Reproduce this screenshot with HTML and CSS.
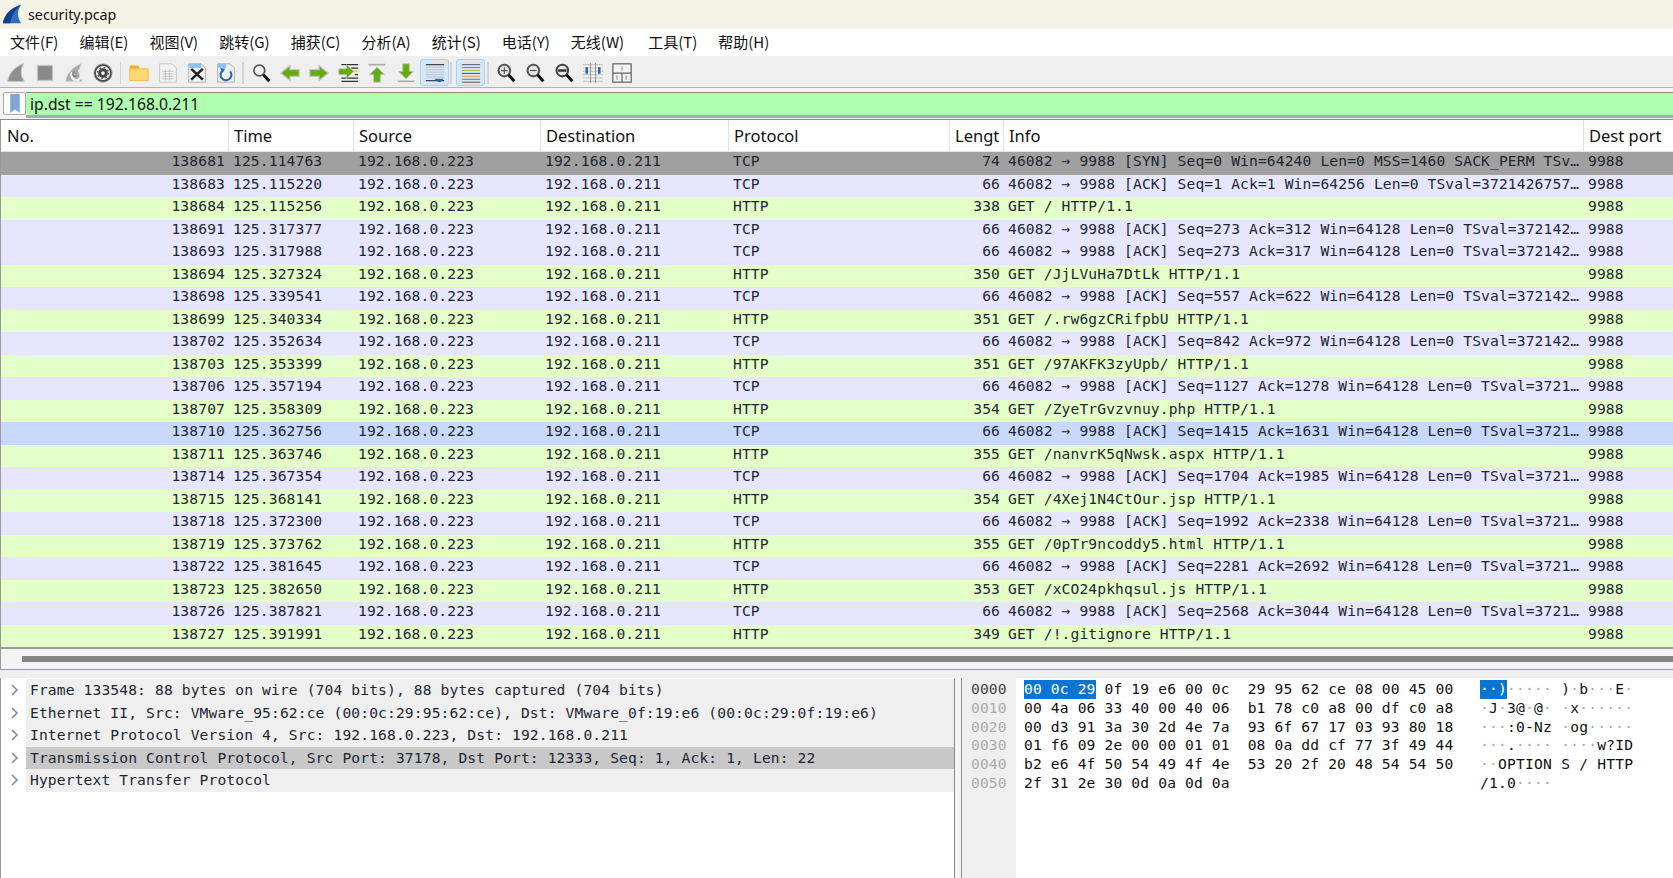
FILE: index.html
```html
<!DOCTYPE html>
<html lang="zh">
<head>
<meta charset="utf-8">
<title>security.pcap</title>
<link rel="stylesheet" href="styles.css">
</head>
<body>
<div class="app">
  <header class="titlebar">
    <svg class="applogo" viewBox="0 0 24 24"><path d="M1 23C3 13 10 5 23 1 18 8 18 16 23 23Z" fill="#2f6fc0"/><path d="M1 23C3 13 10 5 23 1 15 8 11 15 10 23Z" fill="#123f8f"/></svg>
    <span>security.pcap</span>
  </header>
  <nav class="menubar">
    <span>文件(F)</span><span>编辑(E)</span><span>视图(V)</span><span>跳转(G)</span><span>捕获(C)</span><span>分析(A)</span><span>统计(S)</span><span>电话(Y)</span><span>无线(W)</span><span class="menu-tools">工具(T)</span><span>帮助(H)</span>
  </nav>
  <div class="toolbar">
    <div class="tool"><svg viewBox="0 0 24 24"><path d="M2 22C4 12 10 5 21 1 17 8 17 15 22 22Z" fill="#8f8f8f" stroke="#bdbdbd"/></svg></div>
    <div class="tool"><svg viewBox="0 0 24 24"><rect x="3" y="3" width="18" height="18" fill="#8a8a8a" stroke="#c4c4c4" stroke-width="1.5"/></svg></div>
    <div class="tool"><svg viewBox="0 0 24 24"><path d="M2 22C4 12 10 5 21 1 17 8 17 15 22 22Z" fill="#a8a8a8" stroke="#cfcfcf"/><path d="M17 9a6 6 0 1 1-7 2" fill="none" stroke="#efefef" stroke-width="3"/><path d="M15 15a2.500 2.500 0 1 1-2-4" fill="none" stroke="#777" stroke-width="1.500"/></svg></div>
    <div class="tool"><svg viewBox="0 0 24 24"><circle cx="12" cy="12" r="11" fill="#4a4a4a" stroke="#a5a5a5"/><circle cx="12" cy="12" r="8.500" fill="#f2f2f2"/><circle cx="12" cy="12" r="4" fill="none" stroke="#444" stroke-width="3.500"/><circle cx="12" cy="12" r="6.500" fill="none" stroke="#444" stroke-width="1.500" stroke-dasharray="2 3.100"/></svg></div>
    <i class="sep s1"></i>
    <div class="tool"><svg viewBox="0 0 24 24"><path d="M1 7V3h10l2 4Z" fill="#f4ae1c"/><path d="M1 7h22v14H1Z" fill="#fcd872" stroke="#eab83e"/></svg></div>
    <div class="tool"><svg viewBox="0 0 24 24"><path d="M2 1h15l5 5v17H2Z" fill="#f3f3f3" stroke="#bdbdbd"/><path d="M5 10h14M5 13h14M5 16h14M5 19h14M9 8v13M14 8v13" stroke="#bcbcbc" fill="none"/></svg></div>
    <div class="tool"><svg viewBox="0 0 24 24"><path d="M2 1h15l5 5v17H2Z" fill="#f1f1f1" stroke="#a5a5a5"/><path d="M2 1h15v5H2Z" fill="#8cc4ee"/><path d="M5 7l14 13M19 7L5 20" stroke="#222" stroke-width="3"/></svg></div>
    <div class="tool"><svg viewBox="0 0 24 24"><path d="M2 1h15l5 5v17H2Z" fill="#f1f1f1" stroke="#a5a5a5"/><path d="M2 1h10v5H2Z" fill="#8cc4ee"/><path d="M8 9a6.500 6.500 0 1 0 9 1" fill="none" stroke="#2a65ad" stroke-width="2.500"/><path d="M5 6l6 1-3 5Z" fill="#2a65ad"/></svg></div>
    <i class="sep s2"></i>
    <div class="tool"><svg viewBox="0 0 24 24"><circle cx="10" cy="9" r="6.500" fill="#f1f1f1" stroke="#555" stroke-width="2"/><path d="M15 14l7 8" stroke="#111" stroke-width="3.500"/></svg></div>
    <div class="tool"><svg viewBox="0 0 24 24"><path d="M1 12l11-9v5h11v8H12v5Z" fill="#63ab10" stroke="#c4c4c4" stroke-width="1.500"/></svg></div>
    <div class="tool"><svg viewBox="0 0 24 24"><path d="M23 12l-11-9v5H1v8h11v5Z" fill="#63ab10" stroke="#c4c4c4" stroke-width="1.500"/></svg></div>
    <div class="tool"><svg viewBox="0 0 24 24"><path d="M4 2h20M4 22h20M16 6h8M20 14h4M4 18h20" stroke="#333" stroke-width="1.500"/><path d="M19 10h5" stroke="#f4d94a" stroke-width="2.500"/><path d="M19 10l-9-8v5H1v7h9v5Z" fill="#63ab10" stroke="#c4c4c4"/></svg></div>
    <div class="tool"><svg viewBox="0 0 24 24"><path d="M2 2h20" stroke="#aaa" stroke-width="2"/><path d="M12 5l9 9h-5v9H8v-9H3Z" fill="#63ab10" stroke="#c4c4c4"/></svg></div>
    <div class="tool"><svg viewBox="0 0 24 24"><path d="M2 22h20" stroke="#aaa" stroke-width="2"/><path d="M12 19l9-9h-5V1H8v9H3Z" fill="#63ab10" stroke="#c4c4c4"/></svg></div>
    <div class="tool on"><svg viewBox="0 0 24 24"><path d="M1 5h22M1 8h22M1 11h22M1 14h22M1 17h22" stroke="#bcbcbc"/><path d="M1 2h22M1 21h22" stroke="#444" stroke-width="1.500"/><path d="M11 19h11l-2 3-3 1-3-1Z" fill="#2a65ad"/></svg></div>
    <i class="sep s3"></i>
    <div class="tool on"><svg viewBox="0 0 24 24"><path d="M1 2h22" stroke="#555" stroke-width="1.200"/><path d="M1 5.500h22" stroke="#e0524a" stroke-width="1.200"/><path d="M1 9h22" stroke="#8fc43c" stroke-width="1.200"/><path d="M1 12.500h22" stroke="#3f4f98" stroke-width="1.200"/><path d="M1 16h22" stroke="#caa53a" stroke-width="1.200"/><path d="M1 19.500h22" stroke="#a0684a" stroke-width="1.200"/><path d="M1 23h22" stroke="#555" stroke-width="1.200"/></svg></div>
    <i class="sep s4"></i>
    <div class="tool"><svg viewBox="0 0 24 24"><circle cx="10" cy="9" r="7" fill="#e8e8e8" stroke="#555" stroke-width="2.500"/><path d="M6 9h8M10 5v8" stroke="#555" stroke-width="1.500"/><path d="M15 14l7 8" stroke="#111" stroke-width="3.500"/></svg></div>
    <div class="tool"><svg viewBox="0 0 24 24"><circle cx="10" cy="9" r="7" fill="#e8e8e8" stroke="#555" stroke-width="2.500"/><path d="M6 9h8" stroke="#555" stroke-width="1.500"/><path d="M15 14l7 8" stroke="#111" stroke-width="3.500"/></svg></div>
    <div class="tool"><svg viewBox="0 0 24 24"><circle cx="10" cy="9" r="7" fill="#e8e8e8" stroke="#444" stroke-width="2.500"/><path d="M5 9h10" stroke="#333" stroke-width="3"/><path d="M15 14l7 8" stroke="#111" stroke-width="3.500"/></svg></div>
    <div class="tool"><svg viewBox="0 0 24 24"><path d="M0 2h24M0 6h24M0 10h24M0 14h24M0 18h24M0 22h24" stroke="#bbb"/><path d="M9 0v24M15 0v24" stroke="#888"/><path d="M3 5h3v8H3ZM18 5h3v8h-3Z" fill="#2a65ad"/></svg></div>
    <div class="tool"><svg viewBox="0 0 24 24"><rect x="1" y="1" width="22" height="22" fill="#f2f2f2" stroke="#666" stroke-width="1.500"/><path d="M1 12h22M12 12v11" stroke="#666" stroke-width="1.500"/><path d="M12 4v5M6 15v5M17 15v5" stroke="#777"/></svg></div>
  </div>
  <div class="filterbar">
    <div class="bookmark"><svg viewBox="0 0 12 20"><path d="M1 0h10v20l-5-4-5 4Z" fill="#7ea6d6"/></svg></div>
    <div class="filter">ip.dst == 192.168.0.211</div>
  </div>
  <section class="packets">
    <div class="row head"><span>No.</span><span>Time</span><span>Source</span><span>Destination</span><span>Protocol</span><span>Lengt</span><span>Info</span><span>Dest port</span></div>
    <div class="row first"><span class="num">138681</span><span>125.114763</span><span>192.168.0.223</span><span>192.168.0.211</span><span>TCP</span><span class="len">74</span><span>46082 → 9988 [SYN] Seq=0 Win=64240 Len=0 MSS=1460 SACK_PERM TSv…</span><span>9988</span></div>
    <div class="row tcp"><span class="num">138683</span><span>125.115220</span><span>192.168.0.223</span><span>192.168.0.211</span><span>TCP</span><span class="len">66</span><span>46082 → 9988 [ACK] Seq=1 Ack=1 Win=64256 Len=0 TSval=3721426757…</span><span>9988</span></div>
    <div class="row http"><span class="num">138684</span><span>125.115256</span><span>192.168.0.223</span><span>192.168.0.211</span><span>HTTP</span><span class="len">338</span><span>GET / HTTP/1.1</span><span>9988</span></div>
    <div class="row tcp"><span class="num">138691</span><span>125.317377</span><span>192.168.0.223</span><span>192.168.0.211</span><span>TCP</span><span class="len">66</span><span>46082 → 9988 [ACK] Seq=273 Ack=312 Win=64128 Len=0 TSval=372142…</span><span>9988</span></div>
    <div class="row tcp"><span class="num">138693</span><span>125.317988</span><span>192.168.0.223</span><span>192.168.0.211</span><span>TCP</span><span class="len">66</span><span>46082 → 9988 [ACK] Seq=273 Ack=317 Win=64128 Len=0 TSval=372142…</span><span>9988</span></div>
    <div class="row http"><span class="num">138694</span><span>125.327324</span><span>192.168.0.223</span><span>192.168.0.211</span><span>HTTP</span><span class="len">350</span><span>GET /JjLVuHa7DtLk HTTP/1.1</span><span>9988</span></div>
    <div class="row tcp"><span class="num">138698</span><span>125.339541</span><span>192.168.0.223</span><span>192.168.0.211</span><span>TCP</span><span class="len">66</span><span>46082 → 9988 [ACK] Seq=557 Ack=622 Win=64128 Len=0 TSval=372142…</span><span>9988</span></div>
    <div class="row http"><span class="num">138699</span><span>125.340334</span><span>192.168.0.223</span><span>192.168.0.211</span><span>HTTP</span><span class="len">351</span><span>GET /.rw6gzCRifpbU HTTP/1.1</span><span>9988</span></div>
    <div class="row tcp"><span class="num">138702</span><span>125.352634</span><span>192.168.0.223</span><span>192.168.0.211</span><span>TCP</span><span class="len">66</span><span>46082 → 9988 [ACK] Seq=842 Ack=972 Win=64128 Len=0 TSval=372142…</span><span>9988</span></div>
    <div class="row http"><span class="num">138703</span><span>125.353399</span><span>192.168.0.223</span><span>192.168.0.211</span><span>HTTP</span><span class="len">351</span><span>GET /97AKFK3zyUpb/ HTTP/1.1</span><span>9988</span></div>
    <div class="row tcp"><span class="num">138706</span><span>125.357194</span><span>192.168.0.223</span><span>192.168.0.211</span><span>TCP</span><span class="len">66</span><span>46082 → 9988 [ACK] Seq=1127 Ack=1278 Win=64128 Len=0 TSval=3721…</span><span>9988</span></div>
    <div class="row http"><span class="num">138707</span><span>125.358309</span><span>192.168.0.223</span><span>192.168.0.211</span><span>HTTP</span><span class="len">354</span><span>GET /ZyeTrGvzvnuy.php HTTP/1.1</span><span>9988</span></div>
    <div class="row marked"><span class="num">138710</span><span>125.362756</span><span>192.168.0.223</span><span>192.168.0.211</span><span>TCP</span><span class="len">66</span><span>46082 → 9988 [ACK] Seq=1415 Ack=1631 Win=64128 Len=0 TSval=3721…</span><span>9988</span></div>
    <div class="row http"><span class="num">138711</span><span>125.363746</span><span>192.168.0.223</span><span>192.168.0.211</span><span>HTTP</span><span class="len">355</span><span>GET /nanvrK5qNwsk.aspx HTTP/1.1</span><span>9988</span></div>
    <div class="row tcp"><span class="num">138714</span><span>125.367354</span><span>192.168.0.223</span><span>192.168.0.211</span><span>TCP</span><span class="len">66</span><span>46082 → 9988 [ACK] Seq=1704 Ack=1985 Win=64128 Len=0 TSval=3721…</span><span>9988</span></div>
    <div class="row http"><span class="num">138715</span><span>125.368141</span><span>192.168.0.223</span><span>192.168.0.211</span><span>HTTP</span><span class="len">354</span><span>GET /4Xej1N4CtOur.jsp HTTP/1.1</span><span>9988</span></div>
    <div class="row tcp"><span class="num">138718</span><span>125.372300</span><span>192.168.0.223</span><span>192.168.0.211</span><span>TCP</span><span class="len">66</span><span>46082 → 9988 [ACK] Seq=1992 Ack=2338 Win=64128 Len=0 TSval=3721…</span><span>9988</span></div>
    <div class="row http"><span class="num">138719</span><span>125.373762</span><span>192.168.0.223</span><span>192.168.0.211</span><span>HTTP</span><span class="len">355</span><span>GET /0pTr9ncoddy5.html HTTP/1.1</span><span>9988</span></div>
    <div class="row tcp"><span class="num">138722</span><span>125.381645</span><span>192.168.0.223</span><span>192.168.0.211</span><span>TCP</span><span class="len">66</span><span>46082 → 9988 [ACK] Seq=2281 Ack=2692 Win=64128 Len=0 TSval=3721…</span><span>9988</span></div>
    <div class="row http"><span class="num">138723</span><span>125.382650</span><span>192.168.0.223</span><span>192.168.0.211</span><span>HTTP</span><span class="len">353</span><span>GET /xCO24pkhqsul.js HTTP/1.1</span><span>9988</span></div>
    <div class="row tcp"><span class="num">138726</span><span>125.387821</span><span>192.168.0.223</span><span>192.168.0.211</span><span>TCP</span><span class="len">66</span><span>46082 → 9988 [ACK] Seq=2568 Ack=3044 Win=64128 Len=0 TSval=3721…</span><span>9988</span></div>
    <div class="row http"><span class="num">138727</span><span>125.391991</span><span>192.168.0.223</span><span>192.168.0.211</span><span>HTTP</span><span class="len">349</span><span>GET /!.gitignore HTTP/1.1</span><span>9988</span></div>
  </section>
  <div class="hscroll"><div class="thumb"></div></div>
  <div class="bottom">
    <div class="tree">
      <div class="node"><svg class="chev" viewBox="0 0 8 12"><path d="M1 1l5 5-5 5" fill="none" stroke="#888" stroke-width="1.500"/></svg><span>Frame 133548: 88 bytes on wire (704 bits), 88 bytes captured (704 bits)</span></div>
      <div class="node"><svg class="chev" viewBox="0 0 8 12"><path d="M1 1l5 5-5 5" fill="none" stroke="#888" stroke-width="1.500"/></svg><span>Ethernet II, Src: VMware_95:62:ce (00:0c:29:95:62:ce), Dst: VMware_0f:19:e6 (00:0c:29:0f:19:e6)</span></div>
      <div class="node"><svg class="chev" viewBox="0 0 8 12"><path d="M1 1l5 5-5 5" fill="none" stroke="#888" stroke-width="1.500"/></svg><span>Internet Protocol Version 4, Src: 192.168.0.223, Dst: 192.168.0.211</span></div>
      <div class="node sel"><svg class="chev" viewBox="0 0 8 12"><path d="M1 1l5 5-5 5" fill="none" stroke="#888" stroke-width="1.500"/></svg><span>Transmission Control Protocol, Src Port: 37178, Dst Port: 12333, Seq: 1, Ack: 1, Len: 22</span></div>
      <div class="node"><svg class="chev" viewBox="0 0 8 12"><path d="M1 1l5 5-5 5" fill="none" stroke="#888" stroke-width="1.500"/></svg><span>Hypertext Transfer Protocol</span></div>
    </div>
    <div class="splitter"></div>
    <div class="hex">
      <div class="offsets"><div class="cur">0000</div><div>0010</div><div>0020</div><div>0030</div><div>0040</div><div>0050</div></div>
      <div class="bytes">
        <div><b>00 0c 29</b> 0f 19 e6 00 0c  29 95 62 ce 08 00 45 00</div>
        <div>00 4a 06 33 40 00 40 06  b1 78 c0 a8 00 df c0 a8</div>
        <div>00 d3 91 3a 30 2d 4e 7a  93 6f 67 17 03 93 80 18</div>
        <div>01 f6 09 2e 00 00 01 01  08 0a dd cf 77 3f 49 44</div>
        <div>b2 e6 4f 50 54 49 4f 4e  53 20 2f 20 48 54 54 50</div>
        <div>2f 31 2e 30 0d 0a 0d 0a</div>
      </div>
      <div class="ascii">
        <div><b>··)</b><i>·····</i> )<i>·</i>b<i>···</i>E<i>·</i></div>
        <div><i>·</i>J<i>·</i>3@<i>·</i>@<i>·</i> <i>·</i>x<i>······</i></div>
        <div><i>···</i>:0-Nz <i>·</i>og<i>·····</i></div>
        <div><i>···</i>.<i>····</i> <i>····</i>w?ID</div>
        <div><i>··</i>OPTION S / HTTP</div>
        <div>/1.0<i>····</i></div>
      </div>
    </div>
  </div>
</div>
</body>
</html>
```
FILE: styles.css
```css
* { box-sizing: border-box; }
html, body { margin: 0; height: 100%; overflow: hidden; background: #fff; }
.app {
  width: 1673px;
  height: 878px;
  display: flex;
  flex-direction: column;
  font-family: "Noto Sans", "Noto Sans CJK SC", sans-serif;
  color: #111;
}

.titlebar {
  height: 29px;
  background: #f5f2e6;
  display: flex;
  align-items: center;
  gap: 6px;
  padding: 0 0 1px 2px;
  font-size: 14.300px;
}
.applogo { width: 20px; height: 20px; }

.menubar {
  height: 27px;
  display: flex;
  align-items: center;
  padding: 0 0 2px 10px;
  gap: 21px;
  font: 15px "Noto Sans CJK SC", "Noto Sans", sans-serif;
}
.menu-tools { margin-left: 3px; }

.toolbar {
  height: 32px;
  background: #efefef;
  border-bottom: 1px solid #b4b4b4;
  display: flex;
  align-items: center;
  padding: 2px 0 0 1.500px;
}
.tool {
  width: 29px;
  height: 27px;
  flex: none;
  display: flex;
  align-items: center;
  justify-content: center;
}
.tool svg { width: 20px; height: 20px; }
.tool.on {
  background: #d4e8fb;
  border: 1px solid #a8d2f6;
  border-radius: 3px;
}
.sep { flex: none; width: 1.500px; height: 22px; background: #d4d4d4; }
.s1 { margin: 0 3px 0 2px; }
.s2 { margin: 0 2.500px 0 2px; }
.s3 { margin: 0 4.500px 0 1px; }
.s4 { margin: 0 3px 0 2px; }

.filterbar {
  height: 32px;
  display: flex;
  padding: 4px 0 0 3px;
  background: #f4f4f4;
  border-bottom: 1px solid #888;
}
.bookmark {
  width: 23px;
  height: 23px;
  background: #fff;
  border: 1px solid #aaa;
  border-radius: 2px;
  display: flex;
  align-items: center;
  justify-content: center;
}
.bookmark svg { width: 12px; height: 19px; }
.filter {
  flex: 1;
  height: 26px;
  background: #afffaf;
  border-top: 1px solid #8a8a8a;
  border-bottom: 3px solid #a9a9a9;
  padding-left: 4px;
  font-size: 15.700px;
  line-height: 22px;
}

.packets { border-left: 1px solid #9a9a9a; }
.row {
  display: grid;
  grid-template-columns: 227px 125px 187px 188px 221px 54px 580px 1fr;
  height: 22.500px;
  align-items: center;
  font: 14.620px "DejaVu Sans Mono", "Liberation Mono", monospace;
  letter-spacing: 0.130px;
  color: #1d2733;
}
.row > span { padding: 0 0 4px 5px; line-height: 18px; white-space: pre; }
.row > .num, .row > .len { text-align: right; padding: 0 3px 4px 0; }
.row.head {
  height: 32px;
  background: #fff;
  color: #111;
  font: 16.500px "Noto Sans", sans-serif;
  letter-spacing: 0;
  border-bottom: 1px solid #e4e4e4;
  align-items: stretch;
  padding-left: 1px;
}
.row.head > span { line-height: 31px; padding: 0 0 0 5px; border-right: 1.500px solid #e4e4e4; }
.row.head > span:last-child { border-right: 0; }
.first { background: #a0a0a0; }
.tcp { background: #e7e6ff; }
.http { background: #e4ffc7; }
.marked { background: #c9d9fb; }

.hscroll {
  height: 23px;
  border-top: 2px solid #9a9a9a;
  border-bottom: 1px solid #8f98a4;
  border-left: 1px solid #9a9a9a;
  background: #f4f4f4;
  padding: 7px 0 0 21px;
}
.thumb { height: 6px; background: #868686; }

.bottom {
  flex: 1;
  display: flex;
  padding-top: 8px;
  background: linear-gradient(#efefef 8px, #fff 8px);
  min-height: 0;
}
.tree {
  width: 954px;
  flex: none;
  border-left: 1px solid #9a9a9a;
  padding-top: 1px;
  font: 14.620px "DejaVu Sans Mono", "Liberation Mono", monospace;
  letter-spacing: 0.130px;
  color: #1d2733;
}
.node {
  height: 22.500px;
  margin-left: 25px;
  padding-left: 4px;
  background: #efefef;
  line-height: 22px;
  white-space: pre;
  position: relative;
}
.node.sel { background: #c8c8c8; }
.chev {
  position: absolute;
  left: -15px;
  top: 5px;
  width: 8px;
  height: 12px;
}
.splitter {
  width: 8px;
  flex: none;
  background: #f6f6f6;
  border-left: 1px solid #888;
  border-right: 1px solid #888;
}
.hex {
  flex: 1;
  display: flex;
  font: 14.620px/18.800px "DejaVu Sans Mono", "Liberation Mono", monospace;
  letter-spacing: 0.150px;
  color: #111;
}
.offsets {
  width: 54px;
  height: 100%;
  flex: none;
  background: #efefef;
  color: #aaa;
  padding: 2px 0 0 9px;
  letter-spacing: 0.130px;
}
.offsets .cur { color: #444; }
.bytes { width: 464px; flex: none; padding: 2px 0 0 8px; }
.ascii { padding-top: 2px; letter-spacing: 0.220px; }
.bytes > div, .ascii > div { white-space: pre; height: 18.800px; }
.hex b {
  display: inline-block;
  font-weight: normal;
  background: #0a74d2;
  color: #fff;
}
.hex i { font-style: normal; color: #aaa; }
```
